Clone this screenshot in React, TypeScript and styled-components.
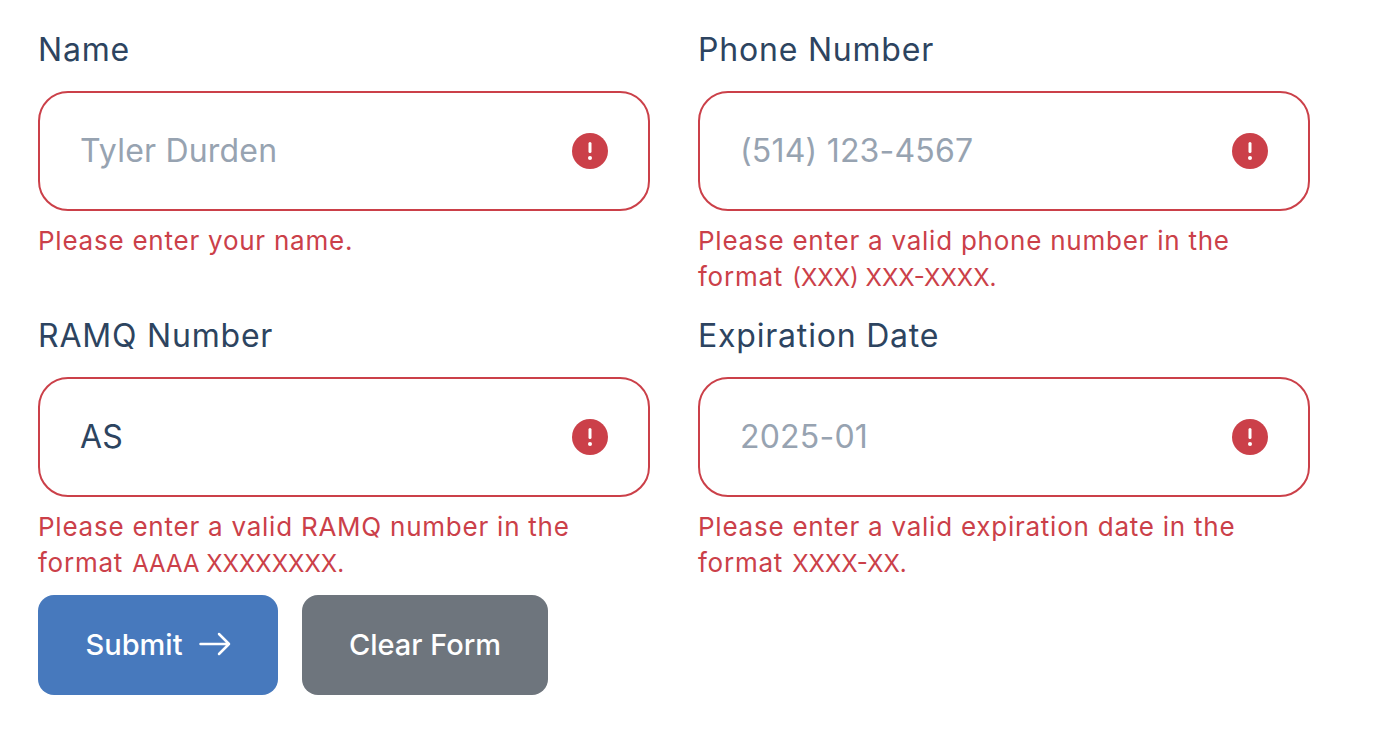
import React from "react";
import styled, { createGlobalStyle } from "styled-components";

const Global = createGlobalStyle`
  html, body { margin: 0; padding: 0; background: #fff; }
  body { font-family: "Inter", "Noto Sans", sans-serif; }
`;

const Page = styled.form`
  width: 1382px;
  height: 746px;
  box-sizing: border-box;
  padding: 26px 0 0 38px;
  overflow: hidden;
`;

const Grid = styled.div`
  display: grid;
  grid-template-columns: 612px 612px;
  column-gap: 48px;
  row-gap: 17px;
`;

const Field = styled.div`
  display: flex;
  flex-direction: column;
`;

const Label = styled.label`
  font-family: "Inter", sans-serif;
  font-size: 32px;
  line-height: 46px;
  letter-spacing: 0.8px;
  color: #2d4460;
  padding-top: 1px;
  margin-bottom: 18px;
`;

const InputBox = styled.div`
  height: 120px;
  box-sizing: border-box;
  border: 2px solid #cb4049;
  border-radius: 30px;
  display: flex;
  align-items: center;
  justify-content: space-between;
  padding: 0 40px;
`;

const Value = styled.span<{ $placeholder?: boolean }>`
  font-family: "Inter", sans-serif;
  font-size: 32px;
  letter-spacing: 0.2px;
  margin-bottom: 2px;
  color: ${(p) => (p.$placeholder ? "#97a3b1" : "#2d4460")};
`;

const Err = styled.div`
  font-family: "Inter", sans-serif;
  font-size: 26px;
  line-height: 36px;
  letter-spacing: 0.76px;
  color: #cb4049;
  margin-top: 12px;
  height: 72px;
`;

const Format = styled.span`
  margin-right: 1px;
`;

const Pattern = styled.span`
  font-size: 24px;
  line-height: 20px;
  letter-spacing: 0;
`;

const Buttons = styled.div`
  display: flex;
  gap: 24px;
  margin-top: 14px;
`;

const Btn = styled.button<{ $bg: string }>`
  height: 100px;
  border: 0;
  border-radius: 16px;
  background: ${(p) => p.$bg};
  color: #fff;
  font-family: "Inter", sans-serif;
  font-size: 29px;
  font-weight: 500;
  white-space: nowrap;
  padding: 0 0 2px;
  display: flex;
  align-items: center;
  justify-content: center;
  gap: 16px;
`;

const SubmitBtn = styled(Btn)`
  width: 240px;
`;

const ClearBtn = styled(Btn)`
  width: 246px;
`;

const AlertIcon = () => (
  <svg width="36" height="36" viewBox="0 0 36 36" aria-hidden="true">
    <circle cx="18" cy="18" r="18" fill="#cb4049" />
    <rect x="16.5" y="9" width="3" height="11" rx="1.5" fill="#fff" />
    <circle cx="18" cy="25" r="2" fill="#fff" />
  </svg>
);

const ArrowIcon = () => (
  <svg width="32" height="24" viewBox="0 0 32 24" fill="none" stroke="#fff" strokeWidth="2.5" strokeLinecap="round" strokeLinejoin="round" aria-hidden="true">
    <path d="M1.5 12H30M20 2l10 10-10 10" />
  </svg>
);

const fields = [
  { label: "Name", value: "Tyler Durden", ph: true, err: "Please enter your name.", pattern: "" },
  { label: "Phone Number", value: "(514) 123-4567", ph: true, err: "Please enter a valid phone number in the ", pattern: "(XXX) XXX-XXXX." },
  { label: "RAMQ Number", value: "AS", ph: false, err: "Please enter a valid RAMQ number in the ", pattern: "AAAA XXXXXXXX." },
  { label: "Expiration Date", value: "2025-01", ph: true, err: "Please enter a valid expiration date in the ", pattern: "XXXX-XX." },
];

export default function App() {
  return (
    <Page>
      <Global />
      <Grid>
        {fields.map((f) => (
          <Field key={f.label}>
            <Label>{f.label}</Label>
            <InputBox>
              <Value $placeholder={f.ph}>{f.value}</Value>
              <AlertIcon />
            </InputBox>
            <Err>
              {f.err}
              {f.pattern && <Format>format </Format>}
              {f.pattern && <Pattern>{f.pattern}</Pattern>}
            </Err>
          </Field>
        ))}
      </Grid>
      <Buttons>
        <SubmitBtn type="button" $bg="#4779bd">Submit <ArrowIcon /></SubmitBtn>
        <ClearBtn type="button" $bg="#6e757d">Clear Form</ClearBtn>
      </Buttons>
    </Page>
  );
}
